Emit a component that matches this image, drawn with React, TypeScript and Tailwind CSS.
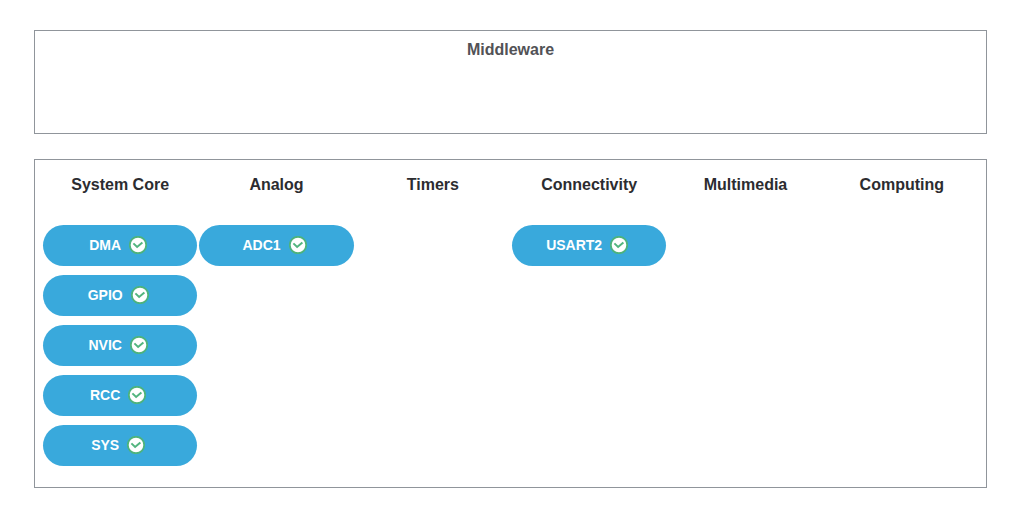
const categories: { name: string; items: string[] }[] = [
  { name: "System Core", items: ["DMA", "GPIO", "NVIC", "RCC", "SYS"] },
  { name: "Analog", items: ["ADC1"] },
  { name: "Timers", items: [] },
  { name: "Connectivity", items: ["USART2"] },
  { name: "Multimedia", items: [] },
  { name: "Computing", items: [] },
];

function CheckBadge() {
  return (
    <svg viewBox="0 0 18 18" className="size-[18px] shrink-0" fill="none" aria-hidden="true">
      <circle cx="9" cy="9" r="8.2" fill="#fff" stroke="#4db37c" strokeWidth="1.8" />
      <path d="M4.4 7.4 L8.1 11 L13.4 6.4" stroke="#53b57f" strokeWidth="2" />
    </svg>
  );
}

function Peripheral({ name }: { name: string }) {
  return (
    <button
      type="button"
      className="flex h-[41px] w-full items-center justify-center gap-2 rounded-full bg-[#39a9dc] pr-1 pb-px text-sm font-bold text-white"
    >
      {name}
      <CheckBadge />
    </button>
  );
}

export default function App() {
  return (
    <main className="flex flex-col gap-[25px] bg-white pt-[30px] pr-11 pb-8 pl-[34px] font-['Liberation_Sans',Arial,sans-serif]">
      <section className="min-h-[104px] border border-[#90959b] pt-[7px]">
        <h2 className="text-center text-base font-bold text-[#525256]">Middleware</h2>
      </section>
      <section className="grid grid-cols-6 gap-x-[2px] border border-[#90959b] pt-[13px] pr-[7px] pb-[21px] pl-2">
        {categories.map((category) => (
          <div key={category.name}>
            <h2 className="text-center text-base font-bold text-[#2c2c30]">{category.name}</h2>
            <div className="mt-7 flex flex-col gap-[9px]">
              {category.items.map((item) => (
                <Peripheral key={item} name={item} />
              ))}
            </div>
          </div>
        ))}
      </section>
    </main>
  );
}
